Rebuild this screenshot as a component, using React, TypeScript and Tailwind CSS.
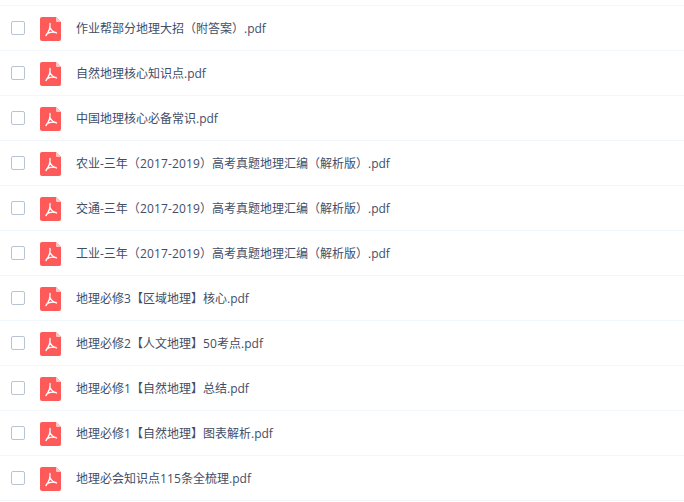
const files = [
  "作业帮部分地理大招（附答案）.pdf",
  "自然地理核心知识点.pdf",
  "中国地理核心必备常识.pdf",
  "农业-三年（2017-2019）高考真题地理汇编（解析版）.pdf",
  "交通-三年（2017-2019）高考真题地理汇编（解析版）.pdf",
  "工业-三年（2017-2019）高考真题地理汇编（解析版）.pdf",
  "地理必修3【区域地理】核心.pdf",
  "地理必修2【人文地理】50考点.pdf",
  "地理必修1【自然地理】总结.pdf",
  "地理必修1【自然地理】图表解析.pdf",
  "地理必会知识点115条全梳理.pdf",
];

function PdfIcon() {
  return (
    <svg width="21" height="24" viewBox="0 0 21 24" className="shrink-0">
      <path
        d="M2 0H16L21 5V22a2 2 0 0 1-2 2H2a2 2 0 0 1-2-2V2a2 2 0 0 1 2-2Z"
        fill="#ff5a5a"
      />
      <path d="M16 0L21 5H17a1 1 0 0 1-1-1Z" fill="#ffc4c4" />
      <path
        d="M10 6.500c.5 3.500-1 8-4 12M10 10.500c1 2.500 3 4.500 6.500 5.500M6.500 17c2.500-1.700 6-2.300 9.500-1.500"
        fill="none"
        stroke="#fff"
        strokeWidth="1.300"
        strokeLinecap="round"
      />
    </svg>
  );
}

// digits in the reference sit a touch wider than Open Sans gives
function FileName({ name }: { name: string }) {
  return (
    <span className="ml-[15px] mt-[2px] whitespace-nowrap">
      {name.split(/(\d+(?:-\d+)?)/).map((part, i) =>
        i % 2 === 1 ? (
          <span key={i} className="tracking-[0.15px]">
            {part}
          </span>
        ) : (
          part
        ),
      )}
    </span>
  );
}

export default function App() {
  return (
    <div className="h-[502px] w-[684px] overflow-hidden bg-white pt-[5px] font-['Open_Sans','Noto_Sans_CJK_SC',sans-serif] text-[12px] text-[#424e67]">
      <div className="border-t border-[#f2f6fd]">
        {files.map((name) => (
          <div key={name} className="flex h-[45px] items-center border-b border-[#f2f6fd] pl-[11px]">
            <span className="h-[14px] w-[14px] shrink-0 rounded-[2px] border border-[#b8c4d4] bg-white" />
            <span className="ml-[15px] mt-[2px]">
              <PdfIcon />
            </span>
            <FileName name={name} />
          </div>
        ))}
      </div>
    </div>
  );
}
